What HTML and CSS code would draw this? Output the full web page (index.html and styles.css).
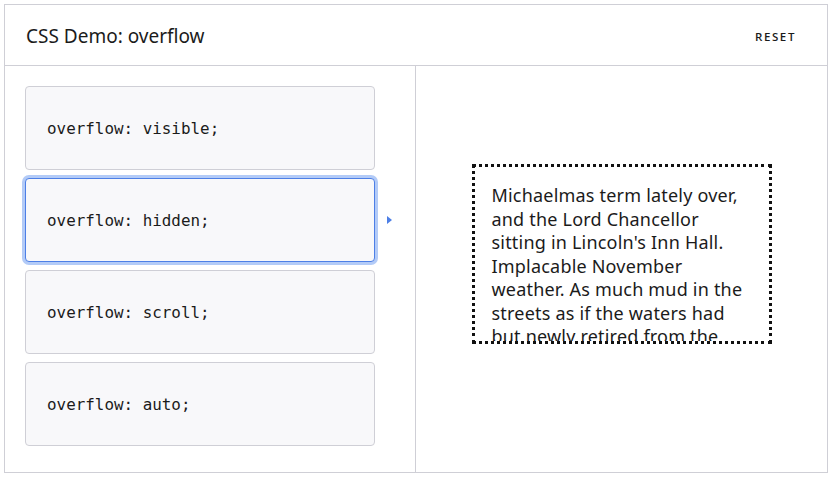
FILE: index.html
```html
<!DOCTYPE html>
<html lang="en">
<head>
<meta charset="utf-8">
<title>CSS Demo: overflow</title>
<link rel="stylesheet" href="styles.css">
</head>
<body>
<section class="demo">
  <header class="demo-header">
    <h1 class="demo-title">CSS Demo: overflow</h1>
    <button class="reset">RESET</button>
  </header>
  <div class="demo-body">
    <div class="choices">
      <div class="choice"><code>overflow: visible;</code></div>
      <div class="choice active"><code>overflow: hidden;</code><span class="pointer"></span></div>
      <div class="choice"><code>overflow: scroll;</code></div>
      <div class="choice"><code>overflow: auto;</code></div>
    </div>
    <div class="output">
      <p class="example">Michaelmas term lately over,<br>and the Lord Chancellor<br>sitting in Lincoln's Inn Hall.<br>Implacable November<br>weather. As much mud in the<br>streets as if the waters had<br>but newly retired from the<br>face of the earth.</p>
    </div>
  </div>
</section>
</body>
</html>
```
FILE: styles.css
```css
* { box-sizing: border-box; }
body {
  margin: 0;
  background: #fff;
  font-family: "Noto Sans", "Open Sans", sans-serif;
  color: #1b1b1b;
}
.demo {
  margin: 4px;
  width: 824px;
  height: 469px;
  border: 1px solid #cfcfd6;
  display: flex;
  flex-direction: column;
}
.demo-header {
  height: 61px;
  flex: none;
  border-bottom: 1px solid #cfcfd6;
  display: flex;
  align-items: center;
  justify-content: space-between;
  padding: 2px 31px 0 21px;
}
.demo-title {
  margin: 0;
  font-weight: 400;
  font-size: 19px;
  color: #1b1b1b;
}
.reset {
  border: 0;
  background: none;
  padding: 0;
  font-family: "Open Sans", sans-serif;
  font-size: 11.5px;
  font-weight: 600;
  letter-spacing: 1.6px;
  color: #1b1b1b;
}
.demo-body {
  flex: 1;
  display: grid;
  grid-template-columns: 411px 1fr;
}
.choices {
  border-right: 1px solid #cfcfd6;
  padding: 20px 0 0 20px;
  display: flex;
  flex-direction: column;
  gap: 8px;
}
.choice {
  position: relative;
  width: 350px;
  height: 84px;
  border: 1px solid #cfcfd6;
  border-radius: 4px;
  background: #f8f8fa;
  display: flex;
  align-items: center;
  padding: 0 21px;
}
.choice code {
  font-family: "DejaVu Sans Mono", "Liberation Mono", monospace;
  font-size: 15.9px;
  color: #1b1b1b;
}
.choice.active {
  border-color: #4d7fe6;
  box-shadow: 0 0 0 3px #b3cbf7;
}
.pointer {
  position: absolute;
  left: calc(100% + 13px);
  top: 50%;
  margin-top: -4px;
  width: 0;
  height: 0;
  border-top: 4px solid transparent;
  border-bottom: 4px solid transparent;
  border-left: 5px solid #4d7fe6;
}
.output {
  display: flex;
  justify-content: center;
  align-items: flex-start;
  padding-top: 98px;
}
.example {
  margin: 0;
  width: 300px;
  height: 180px;
  border: 3px dotted #111;
  padding: 17px 17px 0 17px;
  overflow: hidden;
  white-space: nowrap;
  font-family: "Noto Sans", "Open Sans", sans-serif;
  font-size: 18px;
  letter-spacing: 0.2px;
  line-height: 23.5px;
  color: #1b1b1b;
}
```
